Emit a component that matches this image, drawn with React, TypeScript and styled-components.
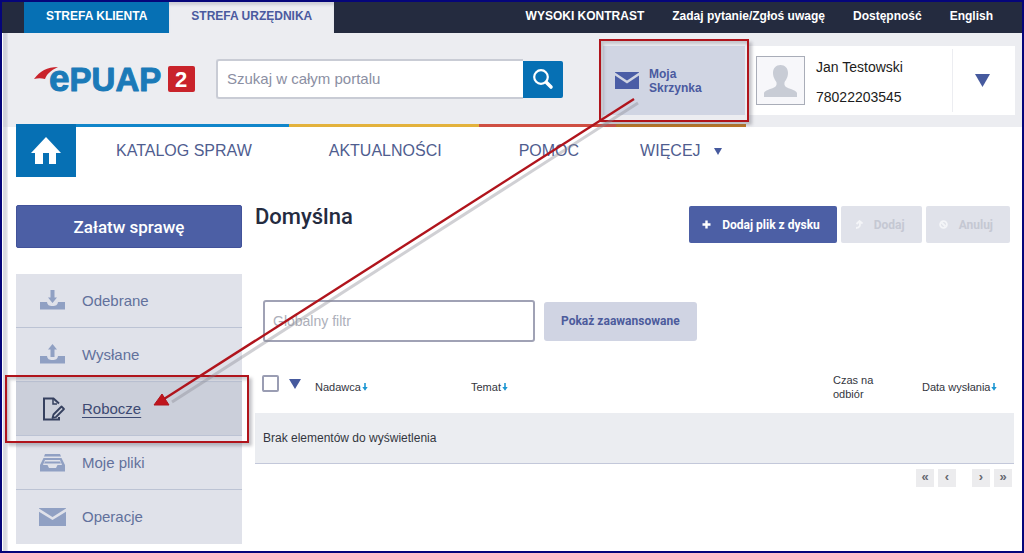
import React from "react";
import styled, { createGlobalStyle } from "styled-components";

const Global = createGlobalStyle`
  *, *::before, *::after { box-sizing: border-box; }
  body { margin: 0; background: #fff; font-family: "Liberation Sans", Arial, sans-serif; color: #242b3f; }
  button, input { font-family: inherit; }
  a { color: inherit; text-decoration: none; }
  svg { display: block; flex: none; }
`;

const Page = styled.div`
  position: relative;
  display: flex;
  flex-direction: column;
  min-height: 100vh;
  border: 2px solid #05057a;
  overflow: hidden;
`;

const EdgeShade = styled.div`
  position: absolute;
  top: 31px;
  bottom: 0;
  left: 0;
  width: 6px;
  background: linear-gradient(to right, #fff 1px, rgba(190, 192, 204, 0.6) 1px, rgba(190, 192, 204, 0.6) 4px, rgba(190, 192, 204, 0.2));
`;

const TopBar = styled.div`
  display: flex;
  justify-content: space-between;
  height: 31px;
  padding-left: 22px;
  background: #242b3f;
  font-size: 12px;
  font-weight: bold;
`;

const Tabs = styled.nav`
  display: flex;
`;

const Tab = styled.a<{ $active?: boolean }>`
  padding: 7px 22px 0;
  line-height: 14px;
  color: ${(p) => (p.$active ? "#4a5a9f" : "#fff")};
  background: ${(p) => (p.$active ? "#ecedf1" : "#0670b4")};
  box-shadow: ${(p) => (p.$active ? "inset 0 4px 3px -1px #cdced6" : "none")};
`;

const TopLinks = styled.nav`
  display: flex;
  gap: 28px;
  padding: 7px 29px 0 0;
  line-height: 14px;
  color: #fff;
`;

const Header = styled.header`
  display: flex;
  height: 94px;
  padding: 13px 7px 12px 32px;
  background: #ecedf1;
`;

const LogoLink = styled.a`
  margin: 13px 20px 0 0;
`;

const Search = styled.form`
  display: flex;
  align-items: center;
  height: 40px;
  margin-top: 13px;
`;

const SearchInput = styled.input`
  width: 307px;
  height: 40px;
  padding: 0 9px 2px;
  border: 2px solid #c9ccd5;
  border-right: 0;
  border-radius: 3px 0 0 3px;
  background: #fff;
  font-size: 15px;
  &::placeholder { color: #8b8fa3; opacity: 1; }
`;

const SearchButton = styled.button`
  display: grid;
  place-items: center;
  width: 40px;
  height: 37px;
  padding: 0;
  border: 0;
  border-radius: 0 2px 2px 0;
  background: #0670b4;
`;

const Mailbox = styled.a`
  position: relative;
  display: flex;
  align-items: center;
  gap: 10px;
  width: 142px;
  margin-left: auto;
  padding: 0 0 0 12px;
  background: #d0d5e3;
  font-size: 12px;
  font-weight: bold;
  line-height: 14px;
  color: #4a5a9f;
`;

const Highlight = styled.span<{ $edges: string }>`
  position: absolute;
  z-index: 1;
  inset: ${(p) => p.$edges};
  border: 2px solid #b0141c;
  box-shadow: 3px 3px 3px rgba(110, 110, 120, 0.4), inset 3px 3px 3px rgba(110, 110, 120, 0.3);
  pointer-events: none;
`;

const UserCard = styled.div`
  display: flex;
  width: 267px;
  margin-left: 3px;
  padding-left: 8px;
  background: #fff;
`;

const Avatar = styled.div`
  width: 49px;
  height: 49px;
  margin-top: 10px;
  border: 1px solid #a9adb8;
  background: #f7f7fa;
`;

const UserText = styled.div`
  flex: 1;
  padding: 6px 0 0 11px;
  font-size: 14px;
  line-height: 30px;
  color: #1c1c20;
`;

const UserMenu = styled.button`
  display: grid;
  place-items: center;
  width: 63px;
  margin: 3px 0;
  padding: 0 3px 0 0;
  border: 0;
  border-left: 1px solid #ecedf1;
  background: none;
`;

const Nav = styled.nav`
  display: flex;
  align-items: flex-start;
  height: 53px;
  margin: -3px 0 0 14px;
  font-size: 16px;
  color: #4f5d8f;
`;

const Home = styled.a`
  display: grid;
  place-items: center;
  width: 60px;
  height: 53px;
  background: #0670b4;
`;

const NavItem = styled.a<{ $stripe: string; $pad?: string }>`
  display: flex;
  align-items: center;
  gap: 13px;
  padding: ${(p) => p.$pad || "15px 37px 0 40px"};
  border-top: 3px solid ${(p) => p.$stripe};
  line-height: 18px;
`;

const Body = styled.div`
  display: flex;
  gap: 13px;
  flex: 1;
  padding: 28px 8px 6px 14px;
`;

const Sidebar = styled.aside`
  width: 226px;
  flex: none;
`;

const StartButton = styled.button`
  width: 100%;
  height: 43px;
  border: 1px solid #42529a;
  border-radius: 2px;
  background: #4c5fa5;
  color: #fff;
  font-family: Roboto, sans-serif;
  font-size: 17px;
  font-weight: 500;
`;

const Menu = styled.nav`
  display: flex;
  flex-direction: column;
  margin-top: 26px;
`;

const MenuItem = styled.a<{ $active?: boolean }>`
  position: relative;
  display: flex;
  align-items: center;
  gap: 16px;
  height: 54px;
  padding-left: 23px;
  background: ${(p) => (p.$active ? "#cbcfda" : "#e0e2ea")};
  border-bottom: 1px solid #bcc3d4;
  color: ${(p) => (p.$active ? "#3d4a72" : "#62719c")};
  font-size: 15px;
  &:last-child { border-bottom-color: #e0e2ea; }
  & > u { text-underline-offset: 3px; text-decoration-thickness: 1px; }
`;

const Main = styled.main`
  flex: 1;
  min-width: 0;
`;

const TitleRow = styled.div`
  display: flex;
  justify-content: space-between;
  padding-right: 4px;
`;

const Title = styled.h1`
  margin: 0;
  font-family: Roboto, sans-serif;
  font-size: 22px;
  font-weight: 500;
  line-height: 24px;
`;

const Actions = styled.div`
  display: flex;
  gap: 4px;
  padding-top: 1px;
`;

const Action = styled.button`
  display: flex;
  align-items: center;
  gap: 11px;
  height: 37px;
  padding: 0 17px 0 13px;
  border: 0;
  border-radius: 2px;
  background: #4c5fa5;
  color: #fff;
  font-family: Roboto, sans-serif;
  font-size: 12px;
  font-weight: 700;
  &:disabled { background: #e0e2ea; color: #c5c8d3; }
`;

const FilterRow = styled.form`
  display: flex;
  align-items: center;
  gap: 9px;
  margin: 57px 0 0 8px;
`;

const FilterInput = styled.input`
  width: 272px;
  height: 42px;
  padding: 0 8px;
  border: 2px solid #a0a2b5;
  border-radius: 3px;
  font-size: 14px;
  &::placeholder { color: #adafba; opacity: 1; }
`;

const AdvancedButton = styled.button`
  height: 39px;
  padding: 0 17px;
  border: 0;
  border-radius: 3px;
  background: #d0d4e3;
  color: #4c5b9c;
  font-family: Roboto, sans-serif;
  font-size: 12px;
  font-weight: 700;
`;

const Table = styled.table`
  width: 100%;
  table-layout: fixed;
  border-collapse: collapse;
  color: #333640;
  th, td { padding: 0; text-align: left; font-weight: normal; }
  th { height: 71px; padding-bottom: 10px; padding-top: 28px; font-size: 11px; line-height: 14px; vertical-align: middle; }
  td { height: 50px; padding-left: 8px; background: #ebedf1; border-bottom: 1px solid #c3c8da; font-size: 12px; }
`;

const Col = styled.col<{ $w?: number }>`
  width: ${(p) => (p.$w ? p.$w + "px" : "auto")};
`;

const HeadCell = styled.div`
  display: flex;
  align-items: center;
  gap: 1px;
`;

const SelectCell = styled(HeadCell)`
  gap: 10px;
  padding: 0 0 6px 7px;
`;

const Check = styled.input`
  appearance: none;
  width: 17px;
  height: 17px;
  margin: 0;
  border: 2px solid #9a9db3;
  border-radius: 2px;
  background: #fff;
`;

const Pager = styled.div`
  display: flex;
  justify-content: flex-end;
  gap: 4px;
  padding: 5px 2px 0 0;
`;

const PagerButton = styled.button<{ $split?: boolean }>`
  width: 18px;
  height: 18px;
  margin-left: ${(p) => (p.$split ? "12px" : "0")};
  padding: 0 0 2px;
  border: 0;
  background: #ececee;
  color: #666870;
  font-size: 13px;
  font-weight: bold;
  line-height: 16px;
`;

const Pointer = styled.svg`
  position: absolute;
  z-index: 2;
  top: -2px;
  left: -2px;
  pointer-events: none;
`;

const Logo = () => (
  <svg width="162" height="44" viewBox="0 -8 162 44" role="img" aria-label="ePUAP 2">
    <path d="M0 12C6 4 13 0 24 0C16 4 13 7 11 12C7 11 4 11 0 12Z" fill="#c9232b" />
    <text x="15" y="24" fontFamily="Liberation Sans, Arial, sans-serif" fontWeight="bold" fontSize="33" fill="#1b7ab8" stroke="#1b7ab8" strokeWidth="1" strokeLinejoin="round">
      <tspan fontSize="37">e</tspan>PUAP
    </text>
    <rect x="134" y="-1" width="27" height="26" rx="2" fill="#c9232b" />
    <text x="147" y="20" textAnchor="middle" fontFamily="Liberation Sans, Arial, sans-serif" fontWeight="bold" fontSize="22" fill="#fff">2</text>
  </svg>
);

const Envelope = ({ w, h, fill, line }: { w: number; h: number; fill: string; line: string }) => (
  <svg width={w} height={h} viewBox="0 0 26 18" preserveAspectRatio="none">
    <rect width="26" height="18" fill={fill} />
    <path d="M-1 1.500L13 10.500L27 1.500" fill="none" stroke={line} strokeWidth="2.600" />
  </svg>
);

const Triangle = ({ w, h }: { w: number; h: number }) => (
  <svg width={w} height={h} viewBox="0 0 10 10" preserveAspectRatio="none">
    <path d="M0 0H10L5 10Z" fill="#465a9e" />
  </svg>
);

const SortArrow = () => (
  <svg width="6" height="9" viewBox="0 0 6 9">
    <path d="M3 1V6" stroke="#1d97d2" strokeWidth="1.600" />
    <path d="M0.300 5H5.700L3 8.800Z" fill="#1d97d2" />
  </svg>
);

const Tray = ({ up }: { up?: boolean }) => (
  <svg width="27" height="22" viewBox="0 0 27 22" fill="#90a0c3">
    <path d="M1 12H8C8.500 15 10 16 13.500 16S18.500 15 19 12H26V19.500H1Z" />
    {up ? <path d="M13.500 0L18 5.500H15.500V13H11.500V5.500H9Z" /> : <path d="M11.500 0H15.500V7.500H18L13.500 13L9 7.500H11.500Z" />}
  </svg>
);

const Files = () => (
  <svg width="27" height="20" viewBox="0 0 27 20" fill="#90a0c3">
    <path d="M6 1H21L22 3.500H5Z" />
    <path d="M4.500 5H22.500L26 12V18.500H1V12ZM6 7L4 12H8.500L10 15H17L18.500 12H23L21 7Z" fillRule="evenodd" />
    <path d="M6 8.500H21L22 10.500H5Z" />
  </svg>
);

const Draft = () => (
  <svg width="27" height="24" viewBox="0 0 27 24" fill="none" stroke="#36415f" strokeWidth="2">
    <path d="M20 6.500L14.500 1.500H5V22.500H20V20" />
    <path d="M14 1.500V7H18" strokeWidth="1.500" />
    <path d="M22.500 9.500L25 12L17 20L13.500 21L14.500 17.500Z" strokeWidth="1.800" strokeLinejoin="round" />
  </svg>
);

const menu = [
  { label: "Odebrane", icon: <Tray /> },
  { label: "Wysłane", icon: <Tray up /> },
  { label: "Robocze", icon: <Draft />, active: true },
  { label: "Moje pliki", icon: <Files /> },
  { label: "Operacje", icon: <Envelope w={27} h={18} fill="#90a0c3" line="#e0e2ea" /> },
];

export default function App() {
  return (
    <Page>
      <Global />
      <TopBar>
        <Tabs>
          <Tab href="#">STREFA KLIENTA</Tab>
          <Tab href="#" $active>STREFA URZĘDNIKA</Tab>
        </Tabs>
        <TopLinks>
          <a href="#">WYSOKI KONTRAST</a>
          <a href="#">Zadaj pytanie/Zgłoś uwagę</a>
          <a href="#">Dostępność</a>
          <a href="#">English</a>
        </TopLinks>
      </TopBar>
      <Header>
        <LogoLink href="#"><Logo /></LogoLink>
        <Search>
          <SearchInput type="text" aria-label="Szukaj" placeholder="Szukaj w całym portalu" />
          <SearchButton type="button" aria-label="Szukaj">
            <svg width="22" height="22" viewBox="0 0 22 22" fill="none" stroke="#fff" strokeLinecap="round">
              <circle cx="9" cy="9" r="6.800" strokeWidth="2.200" />
              <path d="M14.500 14.500L19 19" strokeWidth="3.600" />
            </svg>
          </SearchButton>
        </Search>
        <Mailbox href="#">
          <Envelope w={24} h={17} fill="#4a5da6" line="#d0d5e3" />
          <span>Moja<br />Skrzynka</span>
          <Highlight $edges="-7px -4px -7px -4px" />
        </Mailbox>
        <UserCard>
          <Avatar>
            <svg width="47" height="47" viewBox="0 0 47 47" fill="#c8ccd5">
              <path d="M23.500 8C28 8 31 11 31 16C31 21 28 24 27.500 25.500C27 28 28 29.500 30 30.500C34 32.500 39 33 40 36V40H7V36C8 33 13 32.500 17 30.500C19 29.500 20 28 19.500 25.500C19 24 16 21 16 16C16 11 19 8 23.500 8Z" />
            </svg>
          </Avatar>
          <UserText>
            <div>Jan Testowski</div>
            <div>78022203545</div>
          </UserText>
          <UserMenu type="button" aria-label="Menu użytkownika"><Triangle w={15} h={13} /></UserMenu>
        </UserCard>
      </Header>
      <Nav>
        <Home href="#" aria-label="Strona główna">
          <svg width="30" height="27" viewBox="0 0 30 27" fill="#fff">
            <path d="M15 0L30 16H25V27H18V16H12V27H4V16H0Z" />
          </svg>
        </Home>
        <NavItem href="#" $stripe="#1186ca">KATALOG SPRAW</NavItem>
        <NavItem href="#" $stripe="#e3b23c">AKTUALNOŚCI</NavItem>
        <NavItem href="#" $stripe="#cf4f43">POMOC</NavItem>
        <NavItem href="#" $stripe="#bd741d" $pad="15px 24px 0">
          WIĘCEJ <Triangle w={8} h={7} />
        </NavItem>
      </Nav>
      <Body>
        <Sidebar>
          <StartButton type="button">Załatw sprawę</StartButton>
          <Menu>
            {menu.map((m) => (
              <MenuItem href="#" key={m.label} $active={m.active}>
                {m.icon}
                {m.active ? <u>{m.label}</u> : <span>{m.label}</span>}
                {m.active && <Highlight $edges="-7px -7px -8px -11px" />}
              </MenuItem>
            ))}
          </Menu>
        </Sidebar>
        <Main>
          <TitleRow>
            <Title>Domyślna</Title>
            <Actions>
              <Action type="button">
                <svg width="9" height="9" viewBox="0 0 9 9"><path d="M4.500 0.500V8.500M0.500 4.500H8.500" stroke="#fff" strokeWidth="2.400" /></svg>
                Dodaj plik z dysku
              </Action>
              <Action type="button" disabled>
                <svg width="9" height="9" viewBox="0 0 9 9" fill="none" stroke="#f4f5f8" strokeWidth="1.800"><path d="M2 8C6 8 6.500 5 5.500 2M2.500 4L5.500 1L8.500 3.500" /></svg>
                Dodaj
              </Action>
              <Action type="button" disabled>
                <svg width="9" height="9" viewBox="0 0 9 9" fill="none" stroke="#f4f5f8" strokeWidth="1.800"><circle cx="4.500" cy="4.500" r="3.400" /><path d="M2.500 2.500L6.500 6.500" /></svg>
                Anuluj
              </Action>
            </Actions>
          </TitleRow>
          <FilterRow>
            <FilterInput type="text" aria-label="Globalny filtr" placeholder="Globalny filtr" />
            <AdvancedButton type="button">Pokaż zaawansowane</AdvancedButton>
          </FilterRow>
          <Table>
            <colgroup>
              <Col $w={60} />
              <Col $w={156} />
              <Col />
              <Col $w={89} />
              <Col $w={92} />
            </colgroup>
            <thead>
              <tr>
                <th><SelectCell><Check type="checkbox" aria-label="Zaznacz wszystkie" /><Triangle w={12} h={10} /></SelectCell></th>
                <th><HeadCell>Nadawca <SortArrow /></HeadCell></th>
                <th><HeadCell>Temat <SortArrow /></HeadCell></th>
                <th>Czas na<br />odbiór</th>
                <th><HeadCell>Data wysłania <SortArrow /></HeadCell></th>
              </tr>
            </thead>
            <tbody>
              <tr><td colSpan={5}>Brak elementów do wyświetlenia</td></tr>
            </tbody>
          </Table>
          <Pager>
            <PagerButton type="button" aria-label="Pierwsza strona">«</PagerButton>
            <PagerButton type="button" aria-label="Poprzednia strona">‹</PagerButton>
            <PagerButton type="button" aria-label="Następna strona" $split>›</PagerButton>
            <PagerButton type="button" aria-label="Ostatnia strona">»</PagerButton>
          </Pager>
        </Main>
      </Body>
      <EdgeShade />
      <Pointer width="660" height="430" viewBox="0 0 660 430">
        <path d="M638 103L172 402" stroke="#8a8a94" strokeOpacity="0.4" strokeWidth="3" />
        <path d="M634 99L164 399" stroke="#b0141c" strokeWidth="2.400" />
        <path d="M154 405L162 394L169 405Z" fill="#c0141c" stroke="#b0141c" />
      </Pointer>
    </Page>
  );
}
